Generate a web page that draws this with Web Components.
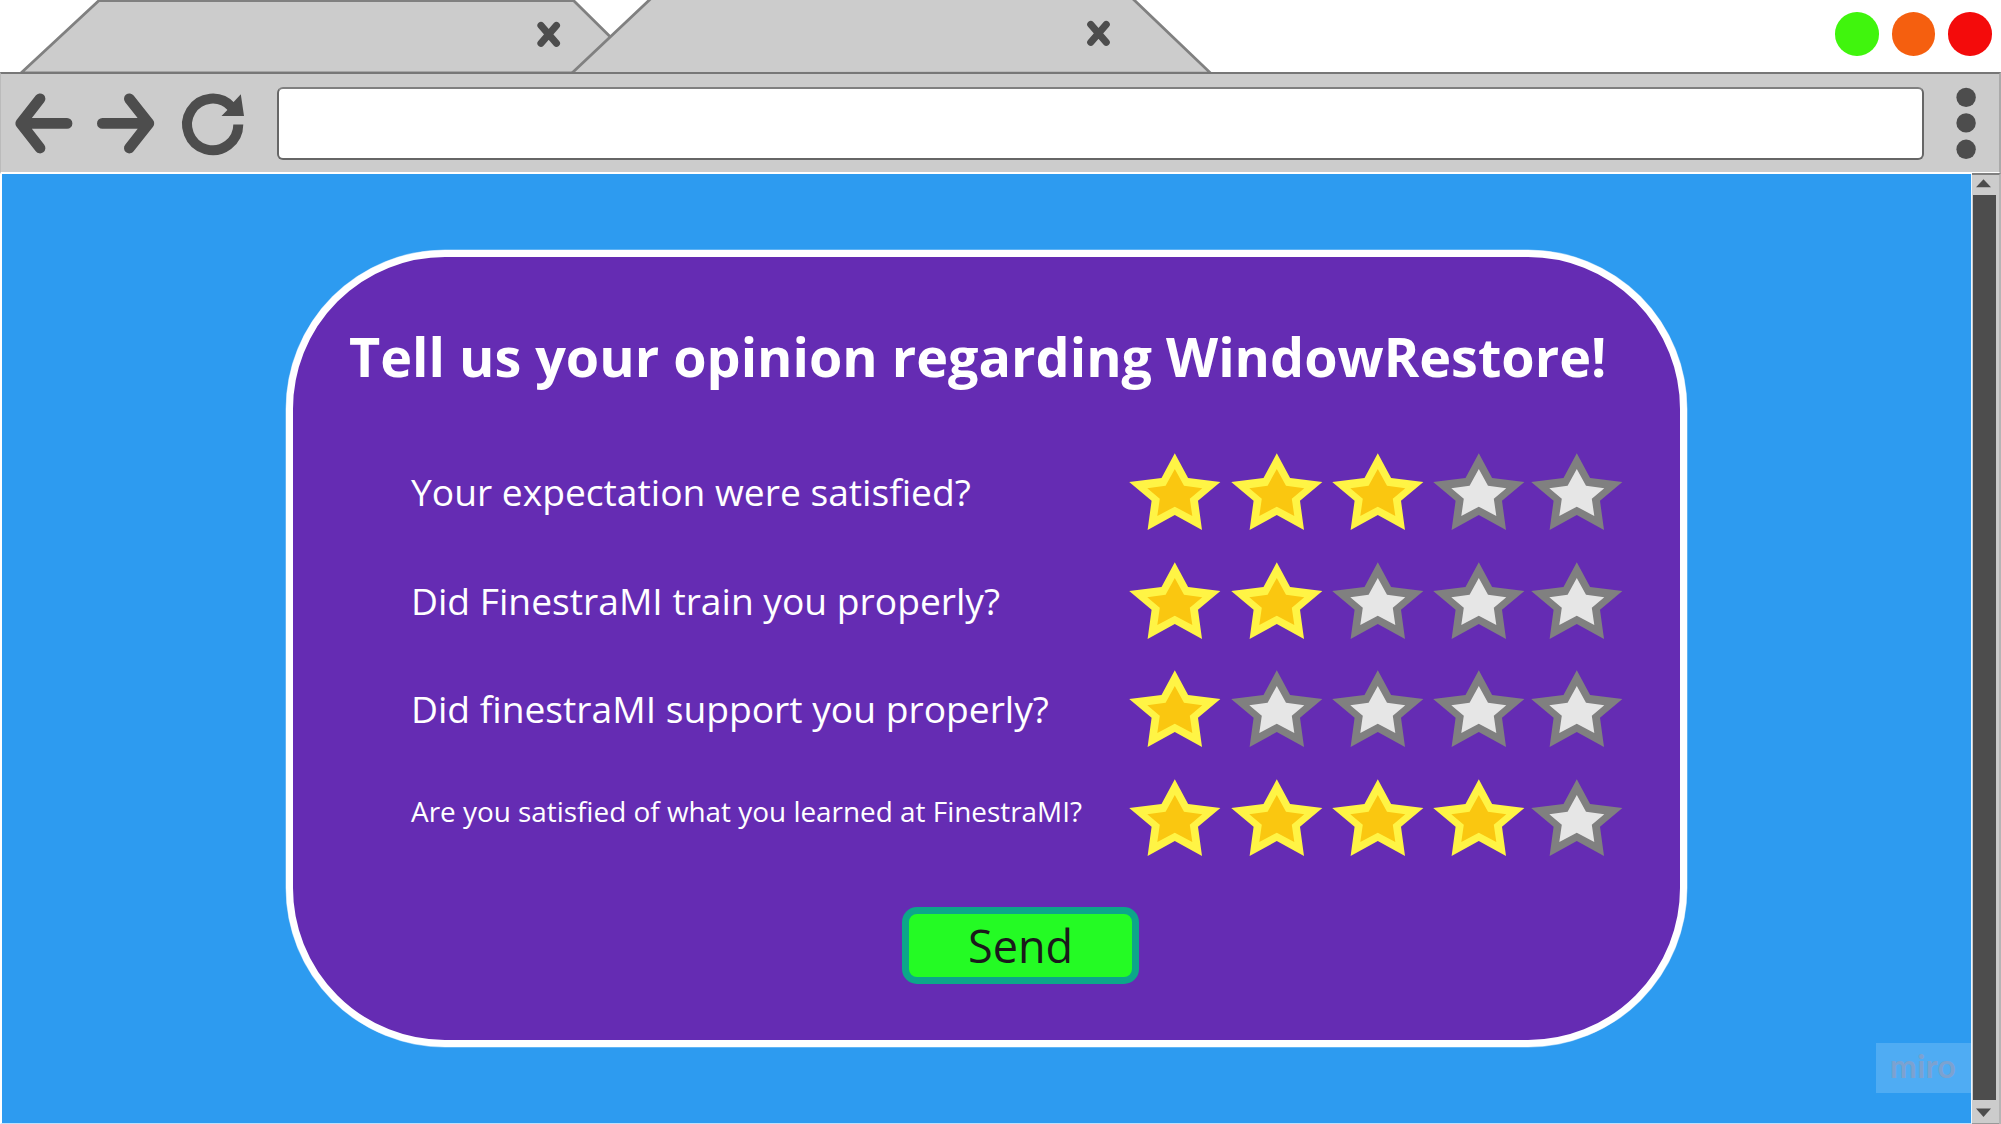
<!DOCTYPE html>
<html lang="en">
<head>
<meta charset="utf-8">
<title>WindowRestore feedback</title>
<style>
html,body{margin:0;width:2001px;height:1124px;overflow:hidden;background:#fff}
body{font-family:"Open Sans",sans-serif}
</style>
</head>
<body>
<browser-window>
  <tab-strip slot="tabs">
    <browser-tab kind="back"></browser-tab>
    <browser-tab kind="front"></browser-tab>
    <window-lights></window-lights>
  </tab-strip>
  <nav-bar slot="nav"></nav-bar>
  <survey-card>
    <span slot="title">Tell us your opinion regarding WindowRestore!</span>
    <rating-row value="3">Your expectation were satisfied?</rating-row>
    <rating-row value="2">Did FinestraMI train you properly?</rating-row>
    <rating-row value="1">Did finestraMI support you properly?</rating-row>
    <rating-row value="4" small>Are you satisfied of what you learned at FinestraMI?</rating-row>
    <send-button slot="action">Send</send-button>
  </survey-card>
  <scroll-bar slot="scroll"></scroll-bar>
</browser-window>
<script>
const define = (name, html) => customElements.define(name, class extends HTMLElement {
  constructor(){
    super();
    this.attachShadow({mode:'open'});
  }
  connectedCallback(){
    this.shadowRoot.innerHTML = typeof html === 'function' ? html(this) : html;
  }
});

define('browser-window', `
<style>
:host{display:flex;flex-direction:column;width:2001px;height:1124px;background:#fff}
.body{display:flex;height:950px;flex:none}
.page{position:relative;box-sizing:border-box;width:1972px;height:950px;padding:76px 0 0 284px;background:#2d9bf0;border:solid #fff;border-width:0 1px 1px 2px;border-right-color:#eaf5fe;border-bottom-color:#c0e1fb}
.mark{position:absolute;right:0;bottom:30px;width:95px;height:50px;box-sizing:border-box;padding-left:14px;background:#4facf3;color:#7ca2d0;font:700 32px/46px Lato,sans-serif;letter-spacing:.4px}
</style>
<slot name="tabs"></slot><slot name="nav"></slot>
<div class="body"><div class="page"><slot></slot><div class="mark">miro</div></div><slot name="scroll"></slot></div>`);

define('tab-strip', `
<style>:host{display:flex;height:72px;width:2001px;padding-left:20px;box-sizing:border-box}</style><slot></slot>`);

define('browser-tab', el => {
  const front = el.getAttribute('kind') === 'front';
  const w = front ? 641 : 627;
  const pts = front ? '-0.5,73.5 79.5,-2 560,-2 638.5,73' : '1,73 79,0.5 553.5,0.5 627,73';
  const cx = front ? 526.5 : 528.7, cy = front ? 33.4 : 34.4;
  return `
<style>:host{display:block;width:${w}px;height:72px;flex:none;${front ? 'margin-left:-75px' : ''}}svg{display:block}</style>
<svg width="${w}" height="72" overflow="visible"><polygon points="${pts}" fill="#ccc" stroke="#808080" stroke-width="2.8"/>
<path d="M${cx-7.8} ${cy-9}L${cx+7.8} ${cy+9}M${cx+7.8} ${cy-9}L${cx-7.8} ${cy+9}" stroke="#4d4d4d" stroke-width="7" stroke-linecap="round"/></svg>`;
});

define('window-lights', `
<style>:host{display:flex;gap:12.9px;margin-left:auto;padding:12.3px 9.3px 0 0}i{width:43.6px;height:43.6px;border-radius:50%}</style>
<i style="background:#40f50d"></i><i style="background:#f55f0f"></i><i style="background:#f40b0b"></i>`);

define('nav-bar', `
<style>
:host{display:flex;position:relative;box-sizing:border-box;width:2001px;height:102px;background:#ccc;border-top:2px solid #777;border-bottom:2px solid #fff;border-left:1px solid #bbb;border-right:2px solid #aaa}
svg{display:block;flex:none;fill:none;stroke:#4d4d4d;stroke-linecap:round;stroke-linejoin:round}
.url{box-sizing:border-box;width:1647px;height:73px;margin-top:13px;background:#fff;border:2px solid #666;border-top-color:#808080;border-radius:6px}
</style>
<svg width="276" height="98" viewBox="1 74 276 98">
<path stroke-width="10.8" d="M40 98.8L20.8 123.4H67M20.8 123.4L40 148"/>
<path stroke-width="10.8" d="M129.4 98.8L148.8 123.4H102.4M148.8 123.4L129.4 148"/>
<path stroke-width="10" stroke-linecap="butt" d="M238.3 124.5A25.6 25.8 0 1 1 231.6 107"/>
<path fill="#4d4d4d" stroke="none" d="M240.8 94.2L244 116H221.5L227.6 109.8L225 100.2L233.4 102.2Z"/>
</svg>
<div class="url"></div>
<svg width="70" height="98" viewBox="1924.3 74 70 98"><g fill="#4d4d4d" stroke="none"><circle cx="1966.4" cy="97.4" r="9.7"/><circle cx="1966.4" cy="122.9" r="9.7"/><circle cx="1966.4" cy="149.3" r="9.7"/></g></svg>`);

define('scroll-bar', `
<style>
:host{display:flex;position:relative;flex-direction:column;box-sizing:border-box;width:29px;height:951px;margin-top:-1px;background:#ccc;border-top:2px solid #808080;border-right:2px solid #b5b5b5;padding-left:1px;box-shadow:inset 0 -1px #999}
.thumb{width:23px;height:905px;background:#4d4d4d}
svg{display:block;fill:#4d4d4d}
</style>
<svg width="23" height="20"><path d="M3 12.2L10.5 4.2L18 12.2Z"/></svg><div class="thumb"></div><svg width="23" height="20"><path d="M3 8.5H18L10.5 17Z"/></svg>`);

define('survey-card', `
<style>
:host{display:flex;flex-direction:column;box-sizing:border-box;width:1401px;height:797px;background:#652cb3;border:7px solid #fff;border-radius:159px;box-shadow:0 0 0 .5px #ffffff80;color:#fff}
h1{margin:62px 0 0 56px;font-size:53.92px;line-height:75px;font-weight:700;white-space:nowrap}
.rows{display:flex;flex-direction:column;margin-top:59px}
.action{display:flex;margin:19px 0 0 609px}
</style>
<h1><slot name="title"></slot></h1><div class="rows"><slot></slot></div><div class="action"><slot name="action"></slot></div>`);

define('rating-row', el => {
  const n = +el.getAttribute('value');
  const small = el.hasAttribute('small');
  let stars = '';
  for (let i = 0; i < 5; i++) stars += `<rating-star ${i < n ? 'on' : ''}></rating-star>`;
  return `
<style>
:host{display:flex;height:108.7px;width:1340px;align-items:flex-start}
.q{width:718px;padding-left:118px;box-sizing:content-box;white-space:nowrap;font-size:${small ? 27.9 : 37.2}px;line-height:50px;margin-top:${small ? '7px' : '14px'}}
.stars{display:flex}
rating-star:nth-child(-n+2){margin-right:9.7px}
rating-star:nth-child(3){margin-right:8.2px}
rating-star:nth-child(4){margin-right:6.8px}
</style>
<div class="q"><slot></slot></div><div class="stars">${stars}</div>`;
});

define('rating-star', el => {
  const on = el.hasAttribute('on');
  return `
<style>:host{display:block;width:92px;height:78px}svg{display:block}</style>
<svg width="92" height="78" viewBox="-45.8 -.3 92 78">
<polygon fill="${on ? '#fff445' : '#808080'}" points="0,0 13.3,24.6 45.6,28.8 23.2,47.4 27.2,76.8 0,61.7 -27.2,76.8 -23.2,47.4 -45.6,28.8 -13.3,24.6"/>
<polygon fill="${on ? '#fac710' : '#e6e6e6'}" points="0,15.8 9.2,32.4 27.5,35 15,45.4 17.5,62.6 0,53.4 -17.5,62.6 -15,45.4 -27.5,35 -9.2,32.4"/></svg>`;
});

define('send-button', `
<style>
:host{display:block}
button{display:block;box-sizing:border-box;width:237px;height:77px;padding:0;border:7px solid #0ca789;border-radius:15px;background:#24fb24;color:#1a1a1a;font:400 45px/63px "Open Sans",sans-serif;text-align:center}
</style><button><slot></slot></button>`);
</script>
</body>
</html>
